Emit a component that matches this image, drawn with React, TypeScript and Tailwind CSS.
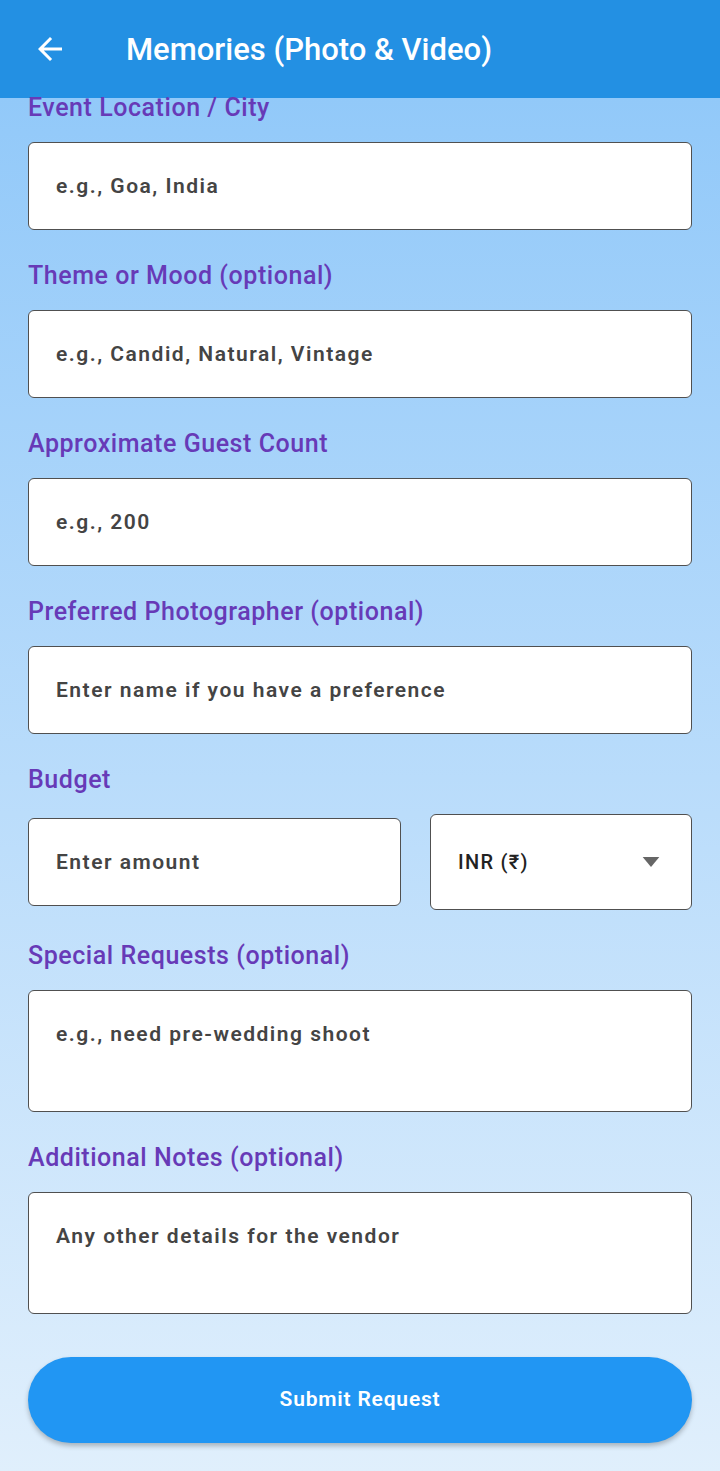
import { useState } from "react";

const FONT = { fontFamily: "Roboto, 'Noto Sans', sans-serif" };

function Label({ children }: { children: string }) {
  return (
    <div className="h-6 text-[25px] font-medium leading-6 tracking-[0.55px] text-[#673ab7]">{children}</div>
  );
}

function Field({ placeholder }: { placeholder: string }) {
  return (
    <input
      placeholder={placeholder}
      className="mt-[22px] mb-[34px] h-[88px] w-full rounded-[6px] border-[1.5px] border-[#505050] bg-white px-[27px] text-[21px] font-semibold tracking-[1.5px] text-[#333] outline-none placeholder:text-[#444]"
    />
  );
}

function Area({ placeholder, last }: { placeholder: string; last?: boolean }) {
  return (
    <textarea
      placeholder={placeholder}
      className={`mt-[22px] block h-[122px] w-full resize-none rounded-[6px] border-[1.5px] border-[#505050] bg-white px-[27px] pt-[29px] text-[21px] font-semibold leading-7 tracking-[1.5px] text-[#333] outline-none placeholder:text-[#444] ${
        last ? "mb-[43px]" : "mb-[34px]"
      }`}
    />
  );
}

export default function App() {
  const [currency] = useState("INR (₹)");

  return (
    <div className="flex min-h-[1471px] flex-col" style={FONT}>
      <header className="flex h-[98px] shrink-0 items-center bg-[#2390e3] text-white">
        <svg viewBox="0 0 24 24" className="ml-[32px] h-[36px] w-[36px]" fill="currentColor">
          <path d="M20 11H7.83l5.59-5.59L12 4l-8 8 8 8 1.41-1.41L7.83 13H20v-2z" />
        </svg>
        <h1 className="ml-[58px] text-[31px] font-medium leading-none">Memories (Photo &amp; Video)</h1>
      </header>

      <main className="flex-1 bg-gradient-to-b from-[#92c9f9] to-[#e0effc] px-[28px]">
        <div className="-mt-[2px]">
          <Label>Event Location / City</Label>
          <Field placeholder="e.g., Goa, India" />

          <Label>Theme or Mood (optional)</Label>
          <Field placeholder="e.g., Candid, Natural, Vintage" />

          <Label>Approximate Guest Count</Label>
          <Field placeholder="e.g., 200" />

          <Label>Preferred Photographer (optional)</Label>
          <Field placeholder="Enter name if you have a preference" />

          <Label>Budget</Label>
          <div className="mt-[22px] mb-[34px] flex h-[96px] items-center gap-[29px]">
            <input
              placeholder="Enter amount"
              className="h-[88px] w-[373px] rounded-[6px] border-[1.5px] border-[#505050] bg-white px-[27px] text-[21px] font-semibold tracking-[1.5px] text-[#333] outline-none placeholder:text-[#444]"
            />
            <div className="flex h-[96px] flex-1 items-center justify-between rounded-[6px] border-[1.5px] border-[#505050] bg-white pl-[27px] pr-[31px]">
              <span className="text-[20px] font-medium tracking-[1.3px] text-[#222]">{currency}</span>
              <svg viewBox="0 0 20 12" className="h-[10px] w-[18px]" fill="#666">
                <path d="M0 0h20L10 12z" />
              </svg>
            </div>
          </div>

          <Label>Special Requests (optional)</Label>
          <Area placeholder="e.g., need pre-wedding shoot" />

          <Label>Additional Notes (optional)</Label>
          <Area placeholder="Any other details for the vendor" last />

          <button className="mb-[29px] h-[86px] w-full rounded-full bg-[#2196f3] text-[21px] font-semibold tracking-[0.8px] text-white shadow-[0_3px_5px_rgba(0,0,0,0.25)]">
            Submit Request
          </button>
        </div>
      </main>
    </div>
  );
}
